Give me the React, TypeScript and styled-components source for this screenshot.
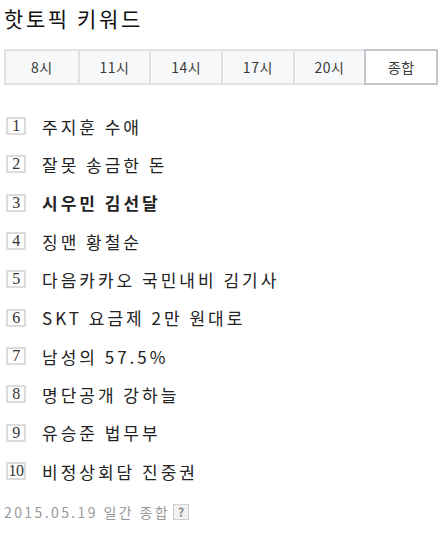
import React, { useState } from "react";
import styled, { createGlobalStyle } from "styled-components";

const GlobalStyle = createGlobalStyle`
    body {
        margin: 0;
        background: #fff;
        font-family: "Noto Sans CJK KR", "Noto Sans", sans-serif;
        color: #222;
    }
`;

const Wrapper = styled.div`
    padding: 4px 5px 0 4px;
`;

const Title = styled.h2`
    margin: 0;
    font-size: 21px;
    line-height: 28px;
    font-weight: 400;
    letter-spacing: 2.6px;
    color: #111;
`;

const Tabs = styled.div`
    display: grid;
    grid-template-columns: repeat(6, 1fr);
    margin-top: 17px;
    border: 2px solid #dfe1e5;
    background: #f7f8fa;
`;

const Tab = styled.button<{ $active?: boolean }>`
    margin: ${(p) => (p.$active ? "-2px -2px -2px 0" : "0")};
    height: ${(p) => (p.$active ? "36px" : "32px")};
    border: none;
    border-left: 2px solid #dfe1e5;
    ${(p) => p.$active && "border: 2px solid #c3c7cc;"}
    background: ${(p) => (p.$active ? "#fff" : "transparent")};
    font-family: inherit;
    font-size: 14px;
    color: #3a3a3a;
    letter-spacing: 0.5px;
    cursor: pointer;
    padding: 0;

    &:first-child {
        border-left: none;
    }
`;

const List = styled.ol`
    list-style: none;
    margin: 22px 0 0;
    padding: 0;
`;

const Item = styled.li`
    display: flex;
    align-items: center;
    height: 38.33px;
    padding-left: 2px;
`;

const Rank = styled.span`
    display: inline-flex;
    align-items: center;
    justify-content: center;
    box-sizing: border-box;
    width: 20px;
    height: 18px;
    border: 2px solid #dcdcdc;
    font-family: "Liberation Serif", serif;
    font-size: 16px;
    color: #333;
    letter-spacing: -0.5px;
`;

const Keyword = styled.a<{ $bold?: boolean }>`
    margin-left: 16px;
    font-size: 17px;
    letter-spacing: 3px;
    color: #222;
    font-weight: ${(p) => (p.$bold ? 700 : 400)};
    text-decoration: none;
`;

const Footer = styled.div`
    display: flex;
    align-items: center;
    gap: 3px;
    margin-top: 12px;
    font-size: 14px;
    line-height: 20px;
    color: #9a9a9a;
    letter-spacing: 2.4px;
`;

const Help = styled.span`
    display: inline-flex;
    align-items: center;
    justify-content: center;
    width: 14px;
    height: 14px;
    border: 1px solid #cfcfcf;
    background: #f1f1f1;
    font-size: 12px;
    font-weight: 700;
    letter-spacing: 0;
    color: #888;
`;

const times = ["8시", "11시", "14시", "17시", "20시", "종합"];

const keywords = [
    "주지훈 수애",
    "잘못 송금한 돈",
    "시우민 김선달",
    "징맨 황철순",
    "다음카카오 국민내비 김기사",
    "SKT 요금제 2만 원대로",
    "남성의 57.5%",
    "명단공개 강하늘",
    "유승준 법무부",
    "비정상회담 진중권",
];

const App: React.FC = () => {
    const [active, setActive] = useState(5);

    return (
        <Wrapper>
            <GlobalStyle />
            <Title>핫토픽 키워드</Title>
            <Tabs>
                {times.map((t, i) => (
                    <Tab key={t} $active={i === active} onClick={() => setActive(i)}>
                        {t}
                    </Tab>
                ))}
            </Tabs>
            <List>
                {keywords.map((k, i) => (
                    <Item key={k}>
                        <Rank>{i + 1}</Rank>
                        <Keyword href="#" $bold={i === 2}>{k}</Keyword>
                    </Item>
                ))}
            </List>
            <Footer>
                <span>2015.05.19 일간 종합</span>
                <Help>?</Help>
            </Footer>
        </Wrapper>
    );
};

export default App;
